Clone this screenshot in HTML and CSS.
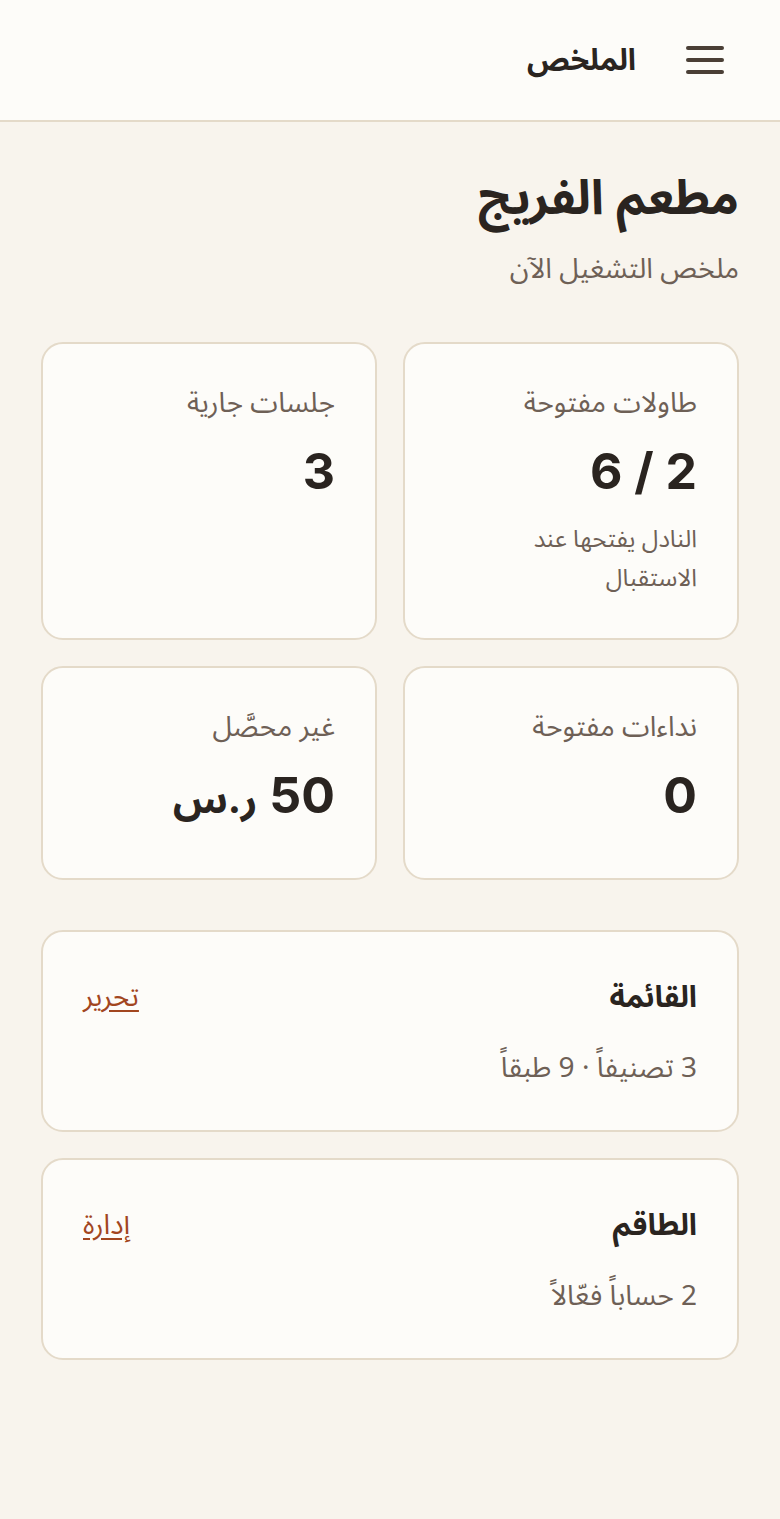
FILE: index.html
```html
<!DOCTYPE html>
<html lang="ar" dir="rtl">
<head>
<meta charset="utf-8">
<title>الملخص</title>
<link rel="stylesheet" href="styles.css">
</head>
<body>
<header class="topbar">
  <button class="menu" aria-label="القائمة">
    <svg width="38" height="30" viewBox="0 0 38 30"><g stroke="#4a3f36" stroke-width="4" stroke-linecap="round"><line x1="2" y1="3" x2="36" y2="3"/><line x1="2" y1="15" x2="36" y2="15"/><line x1="2" y1="27" x2="36" y2="27"/></g></svg>
  </button>
  <div class="topbar-title">الملخص</div>
</header>
<main class="content">
  <h1 class="page-title">مطعم الفريج</h1>
  <p class="page-sub">ملخص التشغيل الآن</p>
  <section class="stats">
    <div class="card stat">
      <div class="stat-label">طاولات مفتوحة</div>
      <div class="stat-value">2 / 6</div>
      <div class="stat-note">النادل يفتحها عند الاستقبال</div>
    </div>
    <div class="card stat">
      <div class="stat-label">جلسات جارية</div>
      <div class="stat-value">3</div>
    </div>
    <div class="card stat short">
      <div class="stat-label">نداءات مفتوحة</div>
      <div class="stat-value">0</div>
    </div>
    <div class="card stat short">
      <div class="stat-label">غير محصَّل</div>
      <div class="stat-value">50 <span class="currency">ر.س</span></div>
    </div>
  </section>
  <section class="card panel">
    <div class="panel-head">
      <h2 class="panel-title">القائمة</h2>
      <a class="panel-link" href="#">تحرير</a>
    </div>
    <p class="panel-sub">3 تصنيفاً · 9 طبقاً</p>
  </section>
  <section class="card panel">
    <div class="panel-head">
      <h2 class="panel-title">الطاقم</h2>
      <a class="panel-link" href="#">إدارة</a>
    </div>
    <p class="panel-sub">2 حساباً فعّالاً</p>
  </section>
</main>
</body>
</html>
```
FILE: styles.css
```css
html, body {
  margin: 0;
  padding: 0;
}
body {
  background: #f8f4ed;
  color: #2a2420;
  font-family: "Noto Sans Arabic", "Noto Sans", "DejaVu Sans", sans-serif;
  min-height: 1519px;
}
.topbar {
  background: #fdfcf9;
  border-bottom: 2px solid #e4dac9;
  display: flex;
  align-items: center;
  padding: 0 56px 0 0;
  gap: 50px;
  box-sizing: border-box;
  height: 122px;
}
.menu {
  background: none;
  border: 0;
  padding: 0;
  display: flex;
  cursor: pointer;
}
.topbar-title {
  font-size: 30px;
  font-weight: 700;
  color: #2a2420;
}
.content {
  padding: 40px 41px 0 41px;
}
.page-title {
  margin: 6px 0 0;
  font-size: 48px;
  font-weight: 700;
  line-height: 1.3;
}
.page-sub {
  margin: 20px 0 0;
  font-size: 28px;
  color: #6e6056;
  line-height: 1.4;
}
.stats {
  margin-top: 52px;
  display: grid;
  grid-template-columns: 1fr 1fr;
  gap: 26px;
}
.card {
  background: #fdfcf9;
  border: 2px solid #e4dac9;
  border-radius: 22px;
  box-sizing: border-box;
}
.stat {
  padding: 40px 40px 30px;
  min-height: 298px;
}
.stat.short {
  min-height: 214px;
}
.stat-label {
  font-size: 28px;
  color: #6e6056;
  line-height: 1.4;
}
.stat-value {
  margin-top: 17px;
  font-family: "Inter", "Noto Sans Arabic", sans-serif;
  font-size: 50px;
  font-weight: 700;
  line-height: 1.25;
  color: #2a2420;
}
.currency {
  font-size: 0.8em;
}
.stat-note {
  margin-top: 18px;
  font-size: 24px;
  line-height: 39px;
  color: #6e6056;
}
.panel {
  margin-top: 26px;
  padding: 36px 40px 40px;
  height: 202px;
}
.stats + .panel {
  margin-top: 50px;
}
.panel-head {
  display: flex;
  justify-content: space-between;
  align-items: center;
}
.panel-title {
  margin: 0;
  font-size: 30px;
  font-weight: 700;
  line-height: 1.5;
}
.panel-link {
  color: #a2461f;
  font-size: 28px;
  text-decoration: underline;
  text-underline-offset: 4px;
}
.panel-sub {
  margin: 22px 0 0;
  font-size: 28px;
  color: #6e6056;
  line-height: 1.4;
}
```
